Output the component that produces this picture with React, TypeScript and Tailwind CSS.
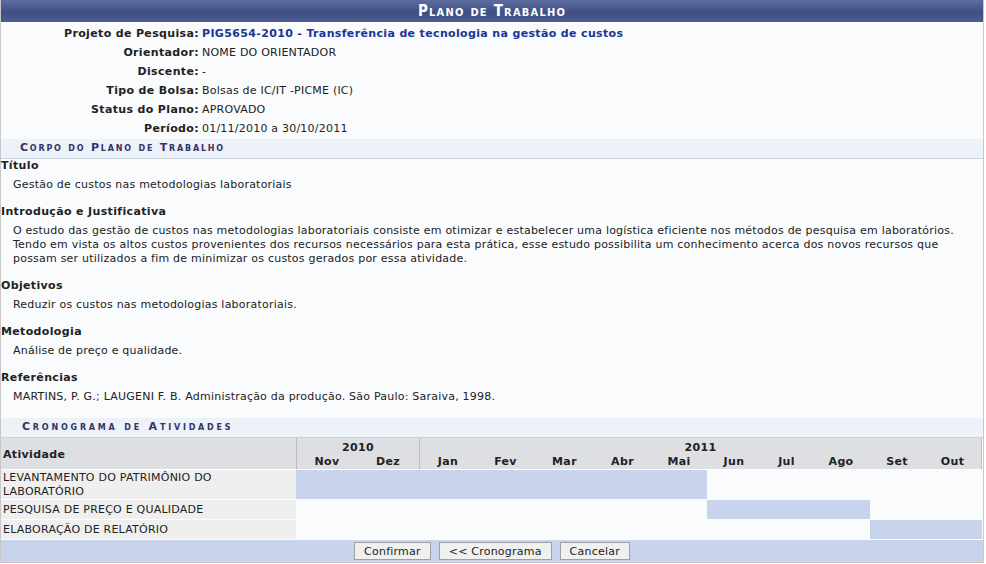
import React from "react";

const dados = [
  { label: "Projeto de Pesquisa:", value: "PIG5654-2010 - Transferência de tecnologia na gestão de custos", link: true },
  { label: "Orientador:", value: "NOME DO ORIENTADOR" },
  { label: "Discente:", value: "-" },
  { label: "Tipo de Bolsa:", value: "Bolsas de IC/IT -PICME (IC)" },
  { label: "Status do Plano:", value: "APROVADO" },
  { label: "Período:", value: "01/11/2010 a 30/10/2011" },
];

const corpo = [
  { titulo: "Título", texto: "Gestão de custos nas metodologias laboratoriais" },
  {
    titulo: "Introdução e Justificativa",
    texto:
      "O estudo das gestão de custos nas metodologias laboratoriais consiste em otimizar e estabelecer uma logística eficiente nos métodos de pesquisa em laboratórios. Tendo em vista os altos custos provenientes dos recursos necessários para esta prática, esse estudo possibilita um conhecimento acerca dos novos recursos que possam ser utilizados a fim de minimizar os custos gerados por essa atividade.",
  },
  { titulo: "Objetivos", texto: "Reduzir os custos nas metodologias laboratoriais." },
  { titulo: "Metodologia", texto: "Análise de preço e qualidade." },
  { titulo: "Referências", texto: "MARTINS, P. G.; LAUGENI F. B. Administração da produção. São Paulo: Saraiva, 1998." },
];

const meses = ["Nov", "Dez", "Jan", "Fev", "Mar", "Abr", "Mai", "Jun", "Jul", "Ago", "Set", "Out"];

const atividades = [
  { nome: "LEVANTAMENTO DO PATRIMÔNIO DO LABORATÓRIO", ini: 0, fim: 6 },
  { nome: "PESQUISA DE PREÇO E QUALIDADE", ini: 7, fim: 9 },
  { nome: "ELABORAÇÃO DE RELATÓRIO", ini: 10, fim: 11 },
];

const SectionBar = ({ children, className }: { children: React.ReactNode; className: string }) => (
  <div
    className={`h-[20px] bg-[#edf1f8] border-b border-[#c8d2e0] flex items-center text-[11px] font-bold text-[#333366] [font-variant:small-caps] ${className}`}
  >
    {children}
  </div>
);

const btn =
  "h-[18px] px-[9px] bg-[#f0f0f0] border border-[#a0a0a0] text-[11px] text-[#222] leading-none tracking-[0.22px]";

export default function App() {
  return (
    <div className="w-[986px] h-[564px] bg-white font-['DejaVu_Sans',Verdana,sans-serif] text-[11px] tracking-[0.22px] text-[#222]">
      <div className="w-[984px] border-x border-b border-[#c8c8c8] bg-[#f9fbfd]">
        <div className="h-[22px] flex items-center justify-center text-white font-bold text-[15px] [font-variant:small-caps] font-['DejaVu_Sans_Condensed','DejaVu_Sans',sans-serif] tracking-[1.2px] bg-[linear-gradient(to_bottom,#5d6d9e_0%,#45558a_45%,#3f4f84_60%,#4d5d90_100%)]">
          Plano de Trabalho
        </div>

        <div className="pt-[3px]">
          {dados.map((d) => (
            <div key={d.label} className="grid grid-cols-[198px_1fr] gap-[3px] h-[19px] items-center">
              <div className="text-right font-bold tracking-[0.35px]">{d.label}</div>
              <div className={d.link ? "font-bold tracking-[0.35px] text-[#1a3594]" : ""}>{d.value}</div>
            </div>
          ))}
        </div>

        <SectionBar className="pl-[19px] tracking-[1.8px]">Corpo do Plano de Trabalho</SectionBar>

        <div className="pb-[14px]">
          {corpo.map((c, i) => (
            <div key={c.titulo} className={i === 0 ? "" : "mt-[13px]"}>
              <div className="font-bold tracking-[0.35px] leading-[14px]">{c.titulo}</div>
              <div className="pl-[12px] pr-[8px] pt-[5px] leading-[14px]">{c.texto}</div>
            </div>
          ))}
        </div>

        <SectionBar className="pl-[21px] tracking-[2.8px]">Cronograma de Atividades</SectionBar>

        <table className="table-fixed border-separate border-spacing-0 w-[981px]">
          <colgroup>
            <col className="w-[295px]" />
            <col className="w-[61px]" />
            <col className="w-[62px]" />
            <col className="w-[57px]" />
            <col className="w-[59px]" />
            <col className="w-[59px]" />
            <col className="w-[57px]" />
            <col className="w-[56px]" />
            <col className="w-[54px]" />
            <col className="w-[51px]" />
            <col className="w-[58px]" />
            <col className="w-[54px]" />
            <col className="w-[58px]" />
          </colgroup>
          <thead className="tracking-[0.35px]">
            <tr className="bg-[#dedfe3]">
              <th rowSpan={2} className="text-left font-bold pl-[2px] pt-[3px] border-b border-white">
                Atividade
              </th>
              <th colSpan={2} className="h-[17px] pt-[3px] leading-[14px] border-l border-[#bdbdc2] font-bold">
                2010
              </th>
              <th colSpan={10} className="h-[17px] pt-[3px] leading-[14px] border-x border-[#bdbdc2] font-bold">
                2011
              </th>
            </tr>
            <tr className="bg-[#dedfe3]">
              {meses.map((m, i) => (
                <th
                  key={m}
                  className={`h-[15px] leading-[14px] font-bold border-b border-b-white ${i === 0 || i === 2 ? "border-l border-l-[#bdbdc2]" : ""} ${i === 11 ? "border-r border-r-[#bdbdc2]" : ""}`}
                >
                  {m}
                </th>
              ))}
            </tr>
          </thead>
          <tbody>
            {atividades.map((a, r) => (
              <tr key={a.nome}>
                <td
                  className={`bg-[#efefef] pl-[2px] pr-[12px] leading-[14px] ${r === 0 ? "h-[29px] pt-[1px]" : "h-[20px]"} border-b border-[#fdfdfd]`}
                >
                  {a.nome}
                </td>
                {meses.map((m, i) => (
                  <td
                    key={m}
                    className={`${i >= a.ini && i <= a.fim ? "bg-[#c8d4ec]" : "bg-[#fafbfd]"} border-b border-[#fdfdfd]`}
                  />
                ))}
              </tr>
            ))}
          </tbody>
        </table>

        <div className="h-[22px] bg-[#c8d4ec] flex items-center justify-center gap-[8px]">
          <button className={btn}>Confirmar</button>
          <button className={btn}>&lt;&lt; Cronograma</button>
          <button className={btn}>Cancelar</button>
        </div>
      </div>
    </div>
  );
}
